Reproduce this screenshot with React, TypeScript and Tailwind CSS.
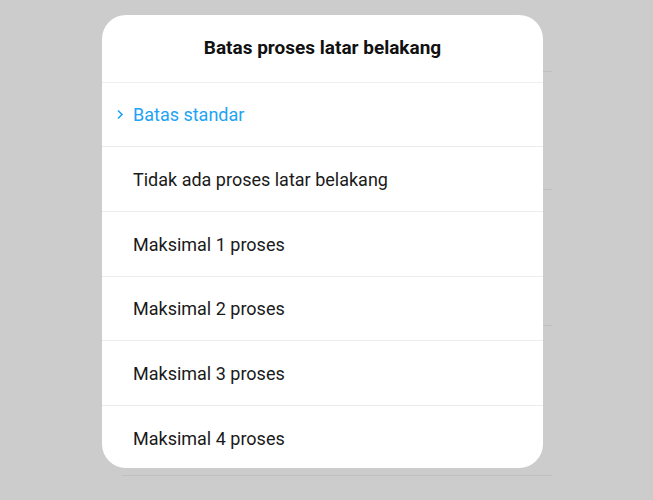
import React from "react";

const items: { t: string; h: string }[] = [
  { t: "Tidak ada proses latar belakang", h: "h-[65px]" },
  { t: "Maksimal 1 proses", h: "h-[65px]" },
  { t: "Maksimal 2 proses", h: "h-[64px]" },
  { t: "Maksimal 3 proses", h: "h-[65px]" },
  { t: "Maksimal 4 proses", h: "h-[65px]" },
];

export default function App() {
  return (
    <div
      className="relative w-[653px] h-[500px] bg-[#cccccc] overflow-hidden"
      style={{ fontFamily: "Roboto, 'Noto Sans', sans-serif" }}
    >
      {/* background page dividers */}
      <div className="ml-[122px] w-[430px] flex flex-col">
        <div className="h-[72px] border-b border-[#bfbfbf]" />
        <div className="h-[118px] border-b border-[#bfbfbf]" />
        <div className="h-[136px] border-b border-[#bfbfbf]" />
        <div className="h-[150px] border-b border-[#bfbfbf]" />
      </div>

      {/* dialog */}
      <div className="absolute left-[102px] top-[15px] w-[441px] h-[453px] bg-white rounded-[24px] overflow-hidden flex flex-col">
        <div className="h-[67px] shrink-0 flex items-center justify-center text-[19px] font-bold text-[#111111]">
          Batas proses latar belakang
        </div>
        <div className="h-[64px] shrink-0 border-t border-[#efefef] flex items-center">
          <svg width="8" height="11" viewBox="0 0 8 11" className="ml-[14px] mr-[9px]">
            <path d="M2 1.5 L6 5.5 L2 9.5" fill="none" stroke="#1ea3f5" strokeWidth="1.6" />
          </svg>
          <span className="text-[18px] text-[#1ea3f5]">Batas standar</span>
        </div>
        {items.map((it) => (
          <div
            key={it.t}
            className={`${it.h} shrink-0 border-t border-[#ececec] flex items-center pl-[31px] text-[18px] text-[#1a1a1a]`}
          >
            {it.t}
          </div>
        ))}
      </div>
    </div>
  );
}
